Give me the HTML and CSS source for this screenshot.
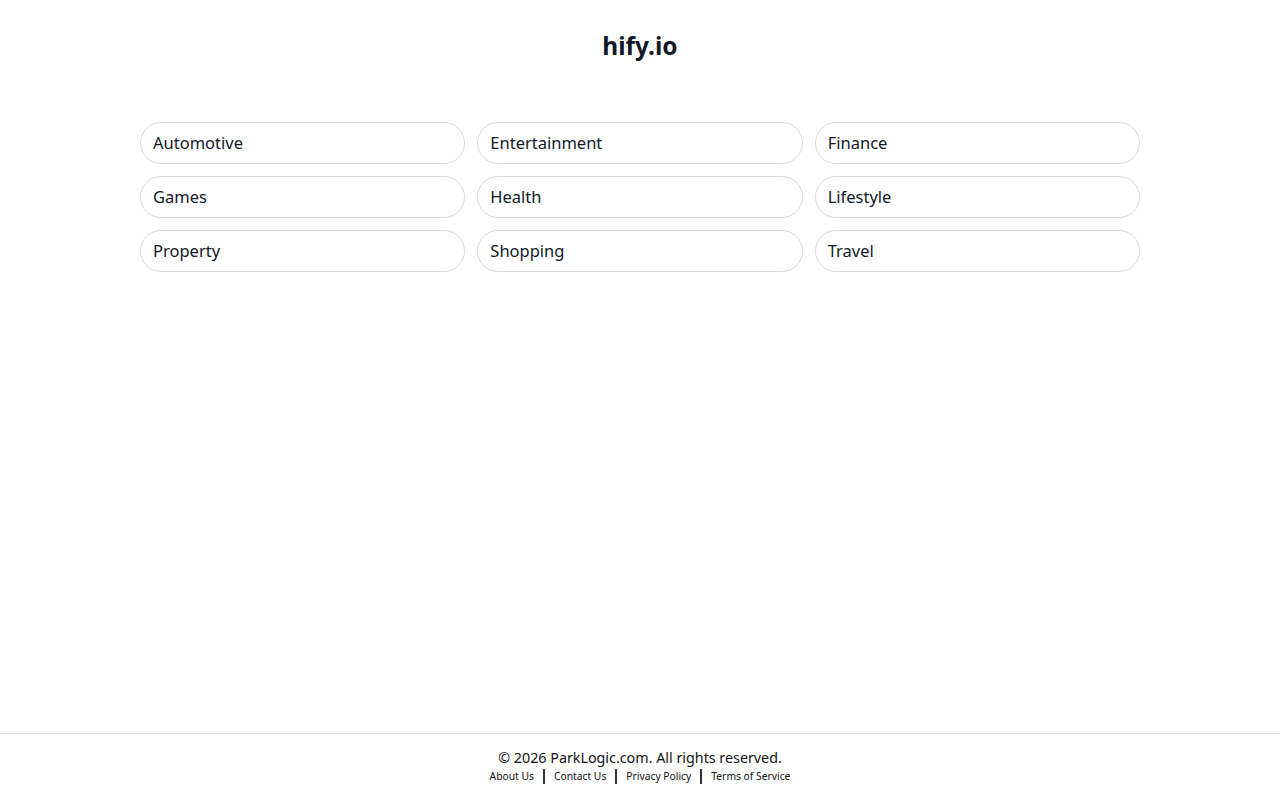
FILE: index.html
```html
<!DOCTYPE html>
<html lang="en">
<head>
<meta charset="utf-8">
<title>hify.io</title>
<link rel="stylesheet" href="styles.css">
</head>
<body>
<div class="page">
  <header class="header">
    <h1 class="title">hify.io</h1>
  </header>
  <main class="main">
    <div class="grid">
      <a class="pill" href="#">Automotive</a>
      <a class="pill" href="#">Entertainment</a>
      <a class="pill" href="#">Finance</a>
      <a class="pill" href="#">Games</a>
      <a class="pill" href="#">Health</a>
      <a class="pill" href="#">Lifestyle</a>
      <a class="pill" href="#">Property</a>
      <a class="pill" href="#">Shopping</a>
      <a class="pill" href="#">Travel</a>
    </div>
  </main>
  <footer class="footer">
    <p class="copy">© 2026 ParkLogic.com. All rights reserved.</p>
    <nav class="links">
      <a href="#">About Us</a>
      <span class="sep"></span>
      <a href="#">Contact Us</a>
      <span class="sep"></span>
      <a href="#">Privacy Policy</a>
      <span class="sep"></span>
      <a href="#">Terms of Service</a>
    </nav>
  </footer>
</div>
</body>
</html>
```
FILE: styles.css
```css
* { box-sizing: border-box; }
html, body { margin: 0; padding: 0; }
body {
  font-family: "Noto Sans", "Open Sans", sans-serif;
  color: #111827;
  background: #fff;
}
.page {
  min-height: 100vh;
  display: flex;
  flex-direction: column;
}
.header {
  display: flex;
  justify-content: center;
  padding-top: 29px;
}
.title {
  margin: 0;
  font-size: 24.5px;
  line-height: 34px;
  font-weight: 700;
  color: #111827;
}
.main {
  flex: 1;
  display: flex;
  justify-content: center;
  padding-top: 59px;
}
.grid {
  width: 1000px;
  display: grid;
  grid-template-columns: repeat(3, 1fr);
  gap: 12px;
  align-content: start;
}
.pill {
  display: flex;
  align-items: center;
  height: 42px;
  padding: 0 12px 2px;
  border: 1px solid #d9d9d9;
  border-radius: 21px;
  font-size: 16.5px;
  color: #111827;
  text-decoration: none;
}
.footer {
  border-top: 1px solid #e5e5e5;
  height: 67px;
  display: flex;
  flex-direction: column;
  align-items: center;
  padding-top: 14px;
}
.copy {
  margin: 0;
  font-size: 14.3px;
  line-height: 20px;
  color: #111;
}
.links {
  display: flex;
  align-items: center;
  gap: 9px;
  font-size: 10.3px;
  line-height: 16px;
}
.links a {
  color: #111;
  text-decoration: none;
}
.sep {
  width: 2px;
  height: 15px;
  background: #333;
}
```
